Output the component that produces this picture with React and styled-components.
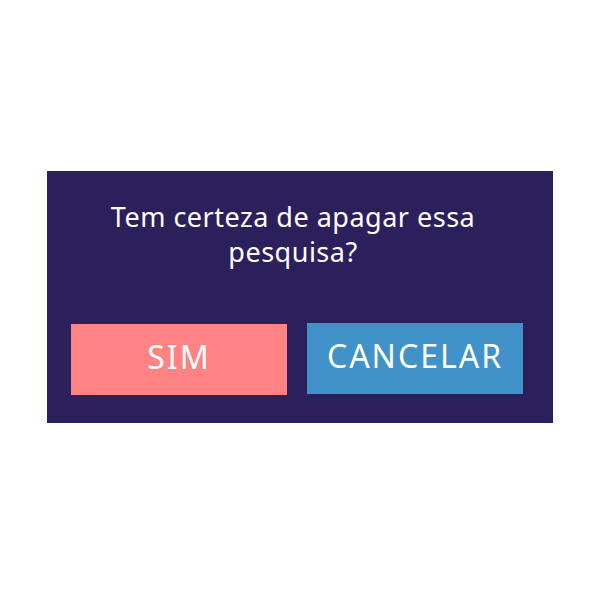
import React from "react";
import styled, { createGlobalStyle } from "styled-components";

const Global = createGlobalStyle`
  html, body { margin: 0; padding: 0; background: #ffffff; }
  body { font-family: "Noto Sans", "Open Sans", sans-serif; }
`;

const Page = styled.div`
  width: 600px;
  height: 595px;
  box-sizing: border-box;
  padding-top: 171px;
  display: flex;
  align-items: flex-start;
  justify-content: center;
`;

const Modal = styled.div`
  width: 506px;
  height: 252px;
  box-sizing: border-box;
  background: #2c205c;
  padding: 28px 30px 0 24px;
  display: flex;
  flex-direction: column;
`;

const Message = styled.p`
  margin: 0;
  padding: 0 44px 0 36px;
  color: #ffffff;
  font-size: 27px;
  line-height: 35px;
  text-align: center;
  letter-spacing: 0.5px;
`;

const Actions = styled.div`
  display: flex;
  gap: 20px;
  margin-top: 54px;
  align-items: flex-start;
`;

const Button = styled.button`
  width: 216px;
  height: 71px;
  box-sizing: border-box;
  border: none;
  background: ${(p) => (p.$variant === "confirm" ? "#ff8383" : "#4092c8")};
  margin-top: ${(p) => (p.$variant === "confirm" ? "1px" : "0")};
  color: #ffffff;
  font-family: "Noto Sans", "Open Sans", sans-serif;
  font-size: 32px;
  letter-spacing: 2px;
  cursor: pointer;
  padding: 0 0 6px 0;
`;

export default function App() {
  return (
    <>
      <Global />
      <Page>
        <Modal>
          <Message>Tem certeza de apagar essa pesquisa?</Message>
          <Actions>
            <Button $variant="confirm">SIM</Button>
            <Button $variant="cancel">CANCELAR</Button>
          </Actions>
        </Modal>
      </Page>
    </>
  );
}
